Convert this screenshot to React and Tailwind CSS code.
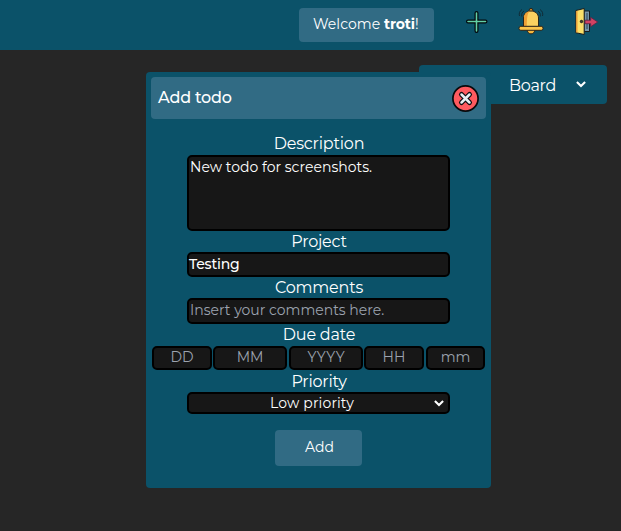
import React from "react";

const Chevron = ({ className }) => (
  <svg className={className} width="10" height="7" viewBox="0 0 10 7" fill="none" stroke="#fff" strokeWidth="2.1">
    <path d="M0.9 1.1 5 5.1 9.1 1.1" />
  </svg>
);

const PlusIcon = () => (
  <svg width="22" height="22" viewBox="0 0 22 22" fill="none" strokeLinecap="round">
    <path d="M10.500 2v18M2 10.500h17.500" stroke="#03080b" strokeWidth="4" />
    <path d="M10.500 2v18M2 10.500h17.500" stroke="#62cfa6" strokeWidth="1.600" />
  </svg>
);

const BellIcon = () => (
  <svg width="26" height="28" viewBox="0 0 26 28" stroke="#2b2419" strokeWidth="1" strokeLinejoin="round">
    <path d="M4 2.500C1.500 4 .8 6.500 1.500 9M6 4C4.200 5.200 3.300 7 3.800 9.500M22 2.500c2.500 1.500 3.200 4 2.500 6.500M20 4c1.800 1.200 2.700 3 2.200 5.500" fill="none" stroke="#102c37" />
    <circle cx="13" cy="3.300" r="1.900" fill="#c98a2d" />
    <path d="M9 22h8c0 6.500-8 6.500-8 0z" fill="#f5b83f" />
    <path d="M5.500 19.500V11c0-9.300 15-9.300 15 0v8.500z" fill="#fbd160" />
    <path d="M6 19V11c0-4 2.500-6.300 5.500-6.700C9.300 7 9 10 8.800 19z" fill="#eea036" stroke="none" />
    <rect x="1" y="19.300" width="24" height="4" rx="1.800" fill="#fbc44c" />
  </svg>
);

const ExitIcon = () => (
  <svg width="24" height="28" viewBox="0 0 24 28" stroke="#171c20" strokeWidth="1" strokeLinejoin="round">
    <path d="M9 4h5.500v20.500H9z" fill="#7595aa" />
    <path d="M12 6v16" fill="none" stroke="#2c4251" />
    <path d="M.8 3.500 9.200 1.500v26L.8 25.700z" fill="#fbe069" />
    <path d="M1.300 4h1.200v21.500H1.300z" fill="#ef9c32" stroke="none" />
    <circle cx="6.500" cy="14.500" r="1.200" fill="#45432b" />
    <path d="M10 13.200h5.700V10.300l7 4.700-7 4.700v-3h-5.700z" fill="#d24263" stroke="#5b2342" strokeWidth="0.8" />
  </svg>
);

const CloseIcon = () => (
  <svg width="27" height="27" viewBox="0 0 27 27" fill="none" strokeLinecap="round">
    <circle cx="13.500" cy="13.500" r="12.600" fill="#ff5a5f" stroke="#080a0c" strokeWidth="1.700" />
    <path d="m9.500 9.500 8 8m0-8-8 8" stroke="#0b0d10" strokeWidth="5" />
    <path d="m9.500 9.500 8 8m0-8-8 8" stroke="#e6edf1" strokeWidth="2.500" />
  </svg>
);

const Label = ({ children, className }) => (
  <div className={`flex items-center justify-center whitespace-nowrap pl-px text-[16px] tracking-[-0.2px] ${className}`}>{children}</div>
);

const box = "shrink-0 rounded-[5px] border-2 border-black bg-[#171717] whitespace-nowrap text-[14px]";
const cell = `${box} flex items-center justify-center pb-px`;

export default function App() {
  return (
    <div className="relative h-[531px] w-[621px] overflow-hidden bg-[#262626] font-['Montserrat',Inter,sans-serif] font-normal text-white">
      <header className="flex h-[50px] bg-[#0b5269] pl-[299px]">
        <div className="mt-2 flex h-[34px] w-[135px] items-center rounded-[4px] bg-[#316b84] pl-[14px] pb-px text-[14px]">
          <span className="whitespace-nowrap tracking-[0.05px]">Welcome <b className="font-bold tracking-[-0.1px]">troti</b>!</span>
        </div>
        <div className="ml-8 mt-[11px]"><PlusIcon /></div>
        <div className="ml-[30px] mt-[7px]"><BellIcon /></div>
        <div className="ml-[31px] mt-[7px]"><ExitIcon /></div>
      </header>
      <div className="ml-[419px] mt-[15px] flex h-[39px] w-[188px] items-center rounded-[4px] bg-[#0b5269] pl-[90px] text-[16px] tracking-[-0.3px]">
        <span className="w-[67px] pt-[3px]">Board</span>
        <Chevron className="mt-[-1px]" />
      </div>

      <section className="absolute left-[146px] top-[72px] flex h-[416px] w-[345px] flex-col items-center rounded-[4px] bg-[#0b5269] pt-[5px]">
        <div className="flex h-[42px] w-[335px] shrink-0 items-center justify-between rounded-[4px] bg-[#316b84] pl-[7px] pr-[7px]">
          <h1 className="text-[16px] font-medium tracking-[-0.2px]">Add todo</h1>
          <CloseIcon />
        </div>
        <Label className="mt-[13px] h-[23px]">Description</Label>
        <div className={`${box} h-[76px] w-[263px] pl-px pt-px leading-[19px]`}><span className="tracking-[0.02px]">New todo for screenshots.</span></div>
        <Label className="h-[21px]">Project</Label>
        <div className={`${box} flex h-[25px] w-[263px] items-center font-medium tracking-[-0.2px]`}>Testing</div>
        <Label className="h-[21px]">Comments</Label>
        <div className={`${box} flex h-[26px] w-[263px] items-center pb-px pl-px text-[#9ca3af]`}>Insert your comments here.</div>
        <Label className="h-[22px]">Due date</Label>
        <div className="flex h-[24px] w-[333px] text-[#9ca3af]">
          <div className={`${cell} w-[60px]`}>DD</div>
          <div className={`${cell} ml-px w-[74px]`}>MM</div>
          <div className={`${cell} ml-[2px] w-[74px]`}>YYYY</div>
          <div className={`${cell} ml-px w-[60px]`}>HH</div>
          <div className={`${cell} ml-[2px] w-[59px]`}>mm</div>
        </div>
        <Label className="h-[22px] pt-[2px]">Priority</Label>
        <div className={`${box} flex h-[22px] w-[263px] items-center pl-[81px]`}>
          <span className="w-[164px] tracking-[0.15px]">Low priority</span>
          <Chevron />
        </div>
        <button className="mt-4 h-[36px] w-[87px] shrink-0 rounded-[4px] bg-[#316b84] pb-[2px] pl-[2px] text-[14px]">Add</button>
      </section>
    </div>
  );
}
